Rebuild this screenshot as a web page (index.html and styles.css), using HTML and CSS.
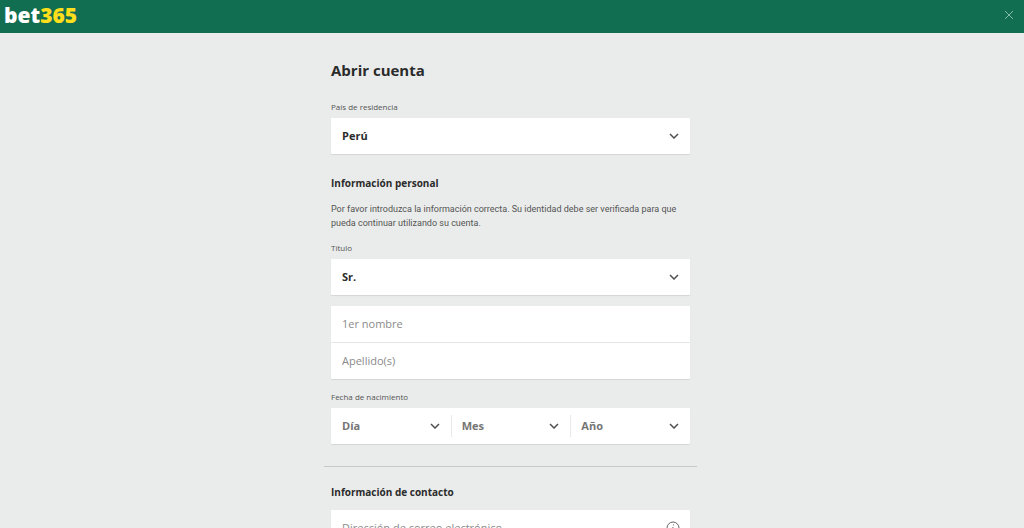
FILE: index.html
```html
<!DOCTYPE html>
<html lang="es">
<head>
<meta charset="utf-8">
<meta name="viewport" content="width=device-width, initial-scale=1">
<title>Abrir cuenta</title>
<link rel="stylesheet" href="styles.css">
</head>
<body>
<header class="topbar">
  <div class="logo">bet<span class="logo-accent">365</span></div>
  <button class="close" type="button" aria-label="Cerrar">
    <svg width="10" height="10" viewBox="0 0 10 10"><path d="M1 1l8 8M9 1l-8 8"/></svg>
  </button>
</header>
<main class="page">
  <form class="form">
    <section class="section">
      <h1 class="title">Abrir cuenta</h1>
      <label class="label" for="country">País de residencia</label>
      <div class="box">
        <div class="picker">
          <select class="control strong" id="country"><option>Perú</option></select>
          <svg class="chevron" viewBox="0 0 10 6"><path d="M1 1l4 4 4-4"/></svg>
        </div>
      </div>
      <h2 class="heading">Información personal</h2>
      <p class="note">Por favor introduzca la información correcta. Su identidad debe ser verificada para que pueda continuar utilizando su cuenta.</p>
      <label class="label" for="title">Título</label>
      <div class="box">
        <div class="picker">
          <select class="control strong" id="title"><option>Sr.</option></select>
          <svg class="chevron" viewBox="0 0 10 6"><path d="M1 1l4 4 4-4"/></svg>
        </div>
      </div>
      <div class="box names">
        <input class="control" type="text" placeholder="1er nombre" aria-label="1er nombre">
        <input class="control" type="text" placeholder="Apellido(s)" aria-label="Apellido(s)">
      </div>
      <label class="label" for="day">Fecha de nacimiento</label>
      <div class="box date">
        <div class="picker">
          <select class="control muted" id="day"><option>Día</option></select>
          <svg class="chevron" viewBox="0 0 10 6"><path d="M1 1l4 4 4-4"/></svg>
        </div>
        <div class="picker">
          <select class="control muted" aria-label="Mes"><option>Mes</option></select>
          <svg class="chevron" viewBox="0 0 10 6"><path d="M1 1l4 4 4-4"/></svg>
        </div>
        <div class="picker">
          <select class="control muted" aria-label="Año"><option>Año</option></select>
          <svg class="chevron" viewBox="0 0 10 6"><path d="M1 1l4 4 4-4"/></svg>
        </div>
      </div>
    </section>
    <section class="section contact">
      <h2 class="heading">Información de contacto</h2>
      <div class="box email">
        <input class="control" type="email" placeholder="Dirección de correo electrónico" aria-label="Dirección de correo electrónico">
        <button class="info" type="button" aria-label="Información">
          <svg width="14" height="14" viewBox="0 0 14 14"><circle cx="7" cy="7" r="6"/><path d="M7.6 3.4l-.2 1M7 6l-.7 4.4"/></svg>
        </button>
      </div>
    </section>
  </form>
</main>
</body>
</html>
```
FILE: styles.css
```css
* { box-sizing: border-box; }
body {
  margin: 0;
  background: #eaeceb;
  color: #2b2b2b;
  font-family: "Open Sans", "Noto Sans", sans-serif;
}
.topbar {
  display: flex;
  align-items: center;
  justify-content: space-between;
  height: 33px;
  padding: 0 9px 3px 4px;
  background: #126e51;
}
.logo {
  color: #fff;
  font-size: 21px;
  font-weight: 800;
  line-height: 24px;
}
.logo-accent { color: #ffdf1b; }
.close, .info {
  display: flex;
  padding: 0;
  border: 0;
  background: none;
}
.close { padding: 1px; }
.close svg { stroke: #83bda7; fill: none; }
.page { padding: 0 3px 0 0; }
.form {
  max-width: 373px;
  margin: 0 auto;
}
.section { padding: 24px 7px 22px; }
.title {
  margin: 0 0 18px;
  font-size: 15px;
  line-height: 26px;
}
.label {
  display: block;
  margin-bottom: 5px;
  color: #545454;
  font-size: 8px;
  line-height: 12px;
}
.box {
  border-radius: 1px;
  background: #fff;
  box-shadow: 0 1px 1px #d4d6d5;
}
.heading {
  margin: 20px 0 10px;
  font-size: 10px;
  line-height: 18px;
}
.note {
  margin: 0 0 12px;
  color: #545454;
  font-family: Roboto, "Open Sans", sans-serif;
  font-size: 9px;
  line-height: 14px;
}
.control {
  display: block;
  width: 100%;
  height: 36px;
  padding: 0 11px 1px;
  border: 0;
  background: none;
  appearance: none;
  font: 11px "Open Sans", "Noto Sans", sans-serif;
}
.control::placeholder { color: #8a8a8a; }
.strong { color: #2b2b2b; font-weight: 700; }
.muted { color: #757575; font-weight: 700; }
.picker { position: relative; }
.chevron {
  position: absolute;
  top: 15px;
  right: 11px;
  width: 10px;
  height: 6px;
  fill: none;
  stroke: #505050;
  stroke-width: 1.5;
  pointer-events: none;
}
.names { margin: 11px 0 12px; }
.names .control + .control { height: 37px; border-top: 1px solid #e4e6e5; }
.date {
  display: grid;
  grid-template-columns: repeat(3, 1fr);
}
.date .picker + .picker::before {
  content: "";
  position: absolute;
  top: 7px;
  bottom: 7px;
  left: 0;
  width: 1px;
  background: #e8eae9;
}
.contact { padding-top: 0; border-top: 1px solid #c5c8c7; }
.contact .heading { margin: 16px 0 9px; }
.email { display: flex; align-items: center; padding-right: 10px; }
.info svg { fill: none; stroke: #666; }
```
